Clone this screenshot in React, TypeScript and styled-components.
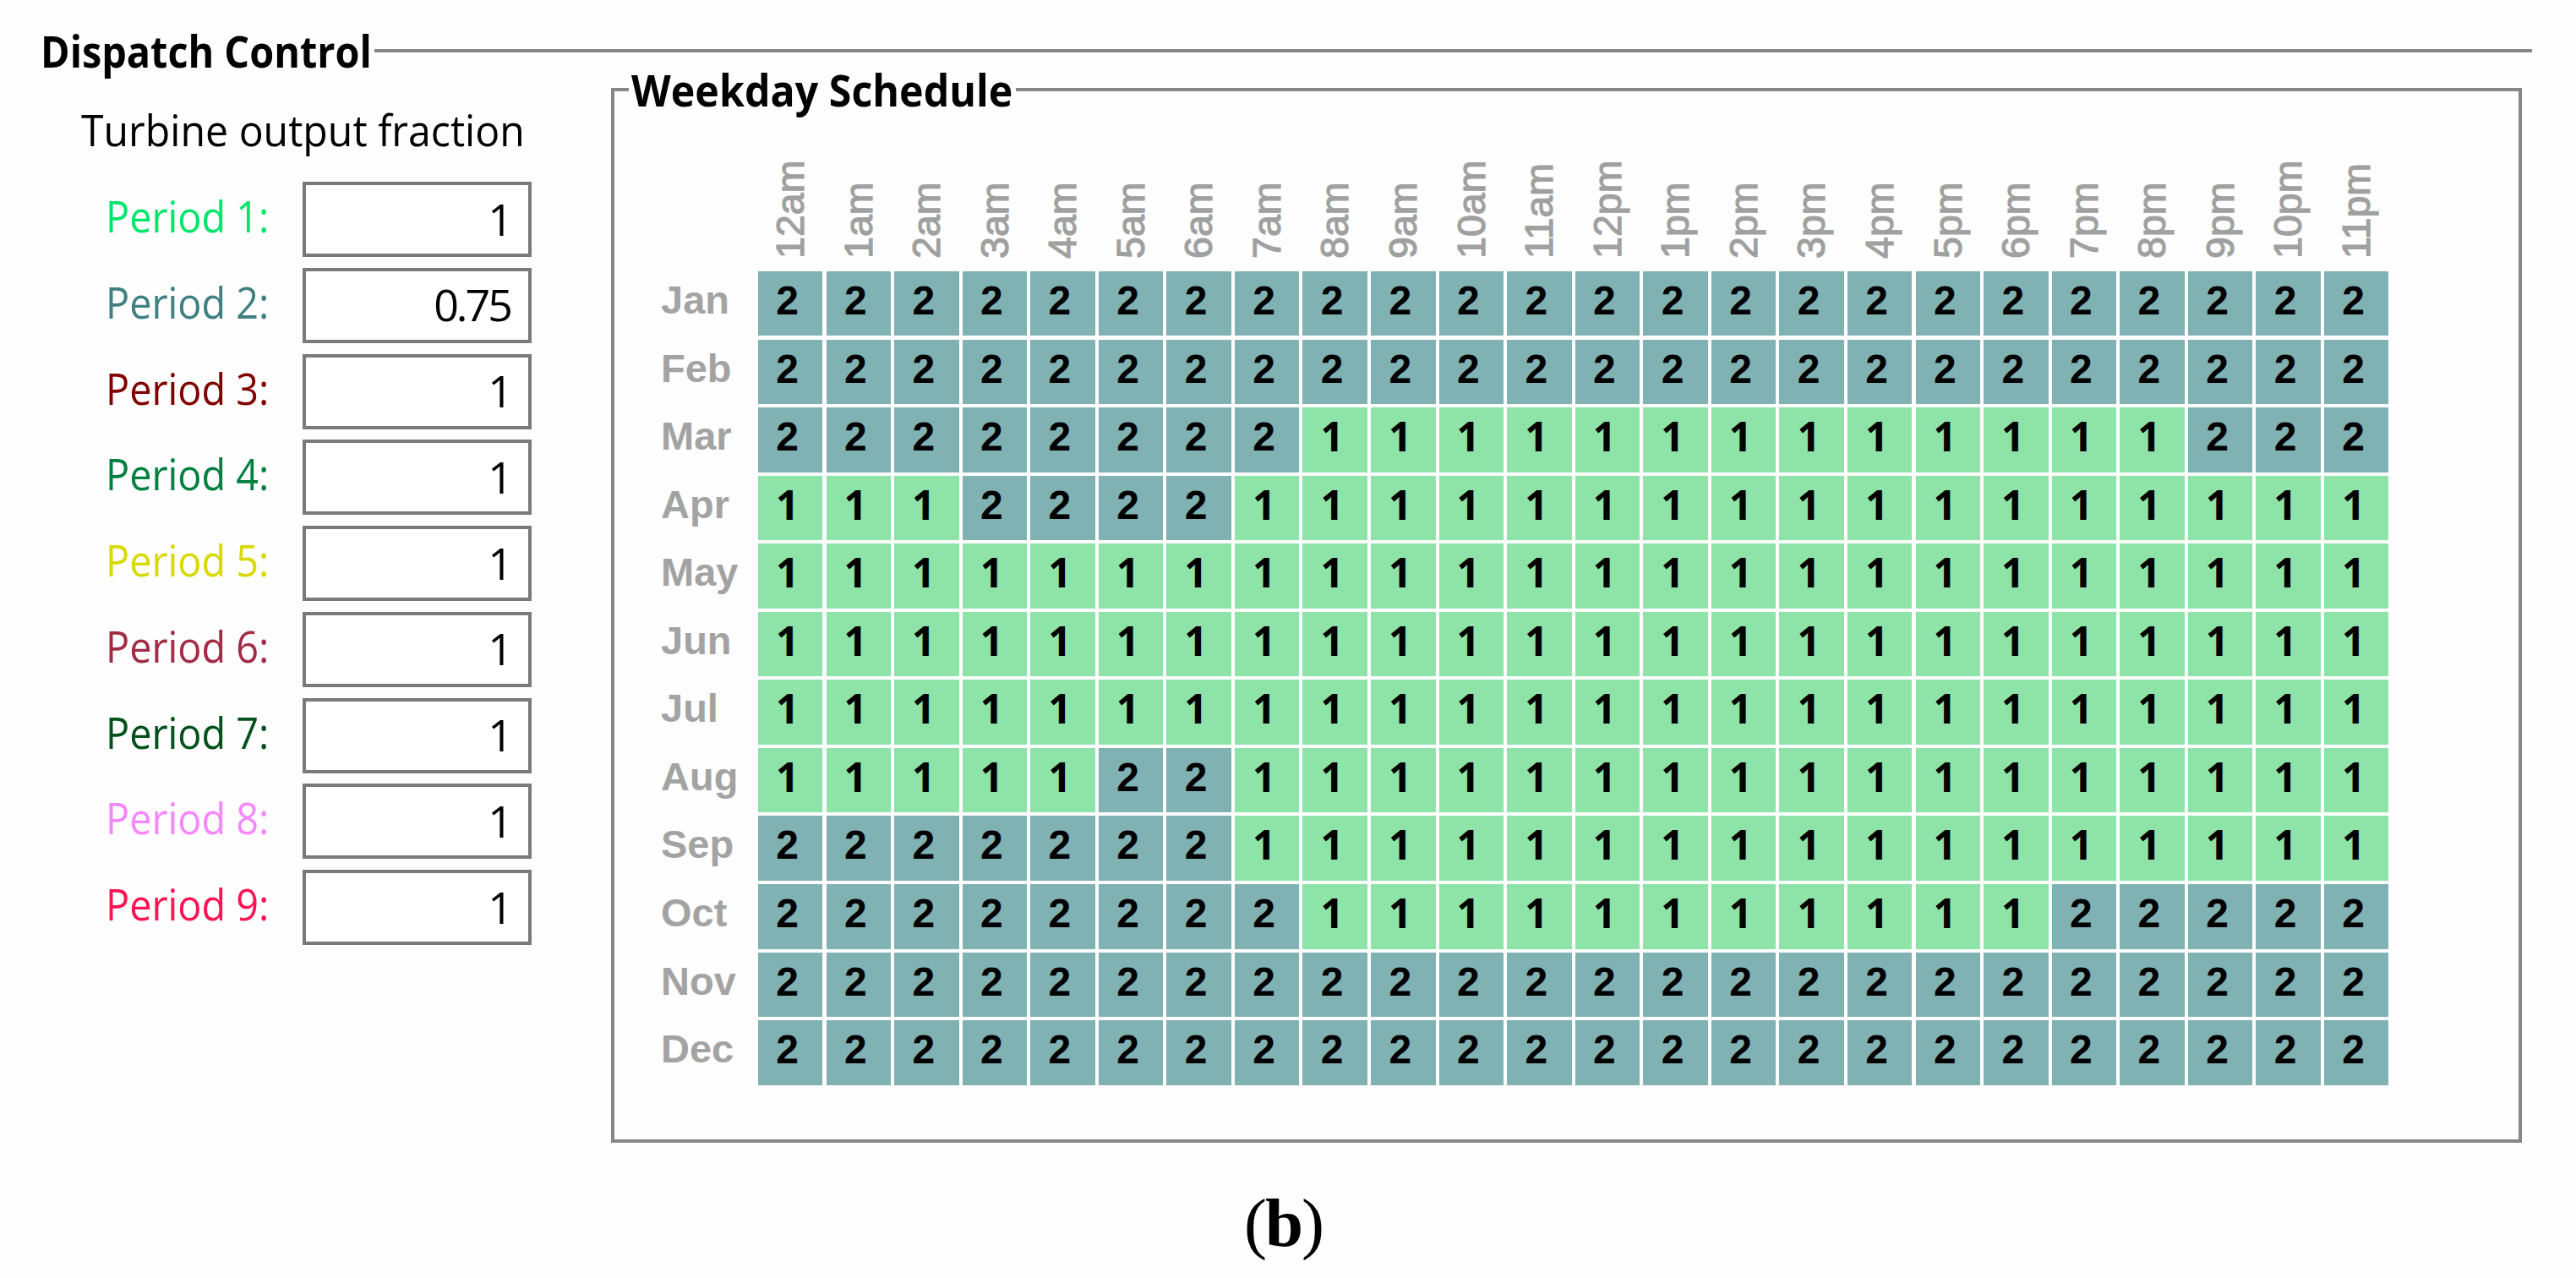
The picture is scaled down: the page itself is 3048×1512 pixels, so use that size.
import React from 'react';
import styled, { createGlobalStyle } from 'styled-components';

const GlobalStyle = createGlobalStyle`
  * {
    box-sizing: border-box;
  }

  body {
    margin: 0;
    background-color: #fefefe;
    color: #000;
    font-family: 'Open Sans', 'Noto Sans', sans-serif;
    font-size: 52px;
  }
`;

const Page = styled.main`
  width: 3048px;
  height: 1512px;
  padding: 42px 52px 0 48px;
  overflow: hidden;
`;

const DispatchGroup = styled.fieldset`
  height: 1310px;
  margin: 0;
  padding: 0;
  border: 0;
  border-top: 4px solid #878787;
`;

const Legend = styled.legend<{ $width: number; $height: number }>`
  width: ${({ $width }) => $width}px;
  height: ${({ $height }) => $height}px;
  line-height: ${({ $height }) => $height - 1}px;
  padding: 0;
  font-weight: 700;
  white-space: nowrap;
`;

const Squeeze = styled.span<{ $scale: number }>`
  display: inline-block;
  transform: scaleX(${({ $scale }) => $scale});
  transform-origin: left center;
  white-space: nowrap;
`;

const Columns = styled.div`
  display: flex;
`;

const Fractions = styled.section`
  width: 675px;
  padding-top: 41px;
`;

const FractionsTitle = styled.h2`
  height: 96px;
  margin: 0;
  padding-left: 48px;
  font-size: 52px;
  font-weight: 400;
  line-height: 67px;
`;

const PeriodList = styled.div`
  display: grid;
  grid-template-rows: repeat(9, 89px);
  row-gap: 12.75px;
`;

const PeriodRow = styled.label`
  display: grid;
  grid-template-columns: 233px 271px;
  column-gap: 77px;
`;

const PeriodName = styled.span<{ $color: string }>`
  padding-left: 77px;
  color: ${({ $color }) => $color};
  line-height: 79px;
`;

const PeriodInput = styled.input`
  width: 271px;
  height: 89px;
  padding: 0 21px 3px 0;
  border: 4px solid #7a7a7a;
  border-radius: 0;
  background-color: #fff;
  color: #000;
  font-family: inherit;
  font-size: 52px;
  letter-spacing: -3px;
  text-align: right;
`;

const SchedulePanel = styled.fieldset`
  width: 2261px;
  height: 1274px;
  margin: 0;
  padding: 0 0 0 55px;
  border: 4px solid #878787;

  legend {
    margin-left: -38px;
    padding-left: 3px;
  }
`;

const Schedule = styled.div`
  display: grid;
  grid-template-columns: 110.9px repeat(24, 76.5px);
  grid-template-rows: 182.9px repeat(12, 76.5px);
  gap: 4.07px;
  font-family: 'Liberation Sans', Arial, sans-serif;
  font-size: 48px;
`;

const HourLabel = styled.div`
  display: flex;
  align-items: center;
  padding-top: 11px;
  writing-mode: vertical-rl;
  transform: rotate(180deg);
  color: #a0a0a0;
  font-size: 46.5px;
  line-height: 80px;
  -webkit-text-stroke: 1.2px #a0a0a0;
`;

const MonthLabel = styled.div`
  color: #a3a3a3;
  font-weight: 700;
  font-size: 47px;
  line-height: 68px;
`;

const Cell = styled.div<{ $period: string }>`
  padding-right: 7px;
  background-color: ${({ $period }) =>
    $period === '1' ? '#8ee3a9' : '#80b1b3'};
  font-family: ${({ $period }) =>
    $period === '1' ? "'Open Sans', sans-serif" : 'inherit'};
  font-weight: 700;
  line-height: ${({ $period }) => ($period === '1' ? 67 : 69)}px;
  text-align: center;
`;

const Caption = styled.p`
  margin: 0;
  padding: 50px 0 0 1424px;
  font-family: 'Liberation Serif', 'Times New Roman', serif;
  font-size: 81px;
  letter-spacing: -2px;
  line-height: 90px;
`;

const periods = [
  { color: '#00e66b', value: '1' },
  { color: '#408080', value: '0.75' },
  { color: '#800000', value: '1' },
  { color: '#008040', value: '1' },
  { color: '#d9d900', value: '1' },
  { color: '#a02c45', value: '1' },
  { color: '#00501c', value: '1' },
  { color: '#f588ff', value: '1' },
  { color: '#ff1453', value: '1' },
];

const hours = ['am', 'pm'].flatMap((half) =>
  [12, 1, 2, 3, 4, 5, 6, 7, 8, 9, 10, 11].map((hour) => `${hour}${half}`)
);

const schedule = [
  { month: 'Jan', hours: '222222222222222222222222' },
  { month: 'Feb', hours: '222222222222222222222222' },
  { month: 'Mar', hours: '222222221111111111111222' },
  { month: 'Apr', hours: '111222211111111111111111' },
  { month: 'May', hours: '111111111111111111111111' },
  { month: 'Jun', hours: '111111111111111111111111' },
  { month: 'Jul', hours: '111111111111111111111111' },
  { month: 'Aug', hours: '111112211111111111111111' },
  { month: 'Sep', hours: '222222211111111111111111' },
  { month: 'Oct', hours: '222222221111111111122222' },
  { month: 'Nov', hours: '222222222222222222222222' },
  { month: 'Dec', hours: '222222222222222222222222' },
];

function PeriodFractions() {
  return (
    <Fractions>
      <FractionsTitle>
        <Squeeze $scale={0.927}>Turbine output fraction</Squeeze>
      </FractionsTitle>
      <PeriodList>
        {periods.map(({ color, value }, index) => (
          <PeriodRow key={index}>
            <PeriodName $color={color}>
              <Squeeze $scale={0.9}>Period {index + 1}:</Squeeze>
            </PeriodName>
            <PeriodInput defaultValue={value} />
          </PeriodRow>
        ))}
      </PeriodList>
    </Fractions>
  );
}

function WeekdaySchedule() {
  return (
    <SchedulePanel>
      <Legend $width={458} $height={56}>
        <Squeeze $scale={0.93}>Weekday Schedule</Squeeze>
      </Legend>
      <Schedule>
        <span />
        {hours.map((hour) => (
          <HourLabel key={hour}>{hour}</HourLabel>
        ))}
        {schedule.map((row) => (
          <React.Fragment key={row.month}>
            <MonthLabel>{row.month}</MonthLabel>
            {row.hours.split('').map((period, hour) => (
              <Cell key={hour} $period={period}>
                {period}
              </Cell>
            ))}
          </React.Fragment>
        ))}
      </Schedule>
    </SchedulePanel>
  );
}

export function App() {
  return (
    <Page>
      <GlobalStyle />
      <DispatchGroup>
        <Legend $width={395} $height={36}>
          <Squeeze $scale={0.9}>Dispatch Control</Squeeze>
        </Legend>
        <Columns>
          <PeriodFractions />
          <WeekdaySchedule />
        </Columns>
      </DispatchGroup>
      <Caption>
        (<b>b</b>)
      </Caption>
    </Page>
  );
}

export default App;
